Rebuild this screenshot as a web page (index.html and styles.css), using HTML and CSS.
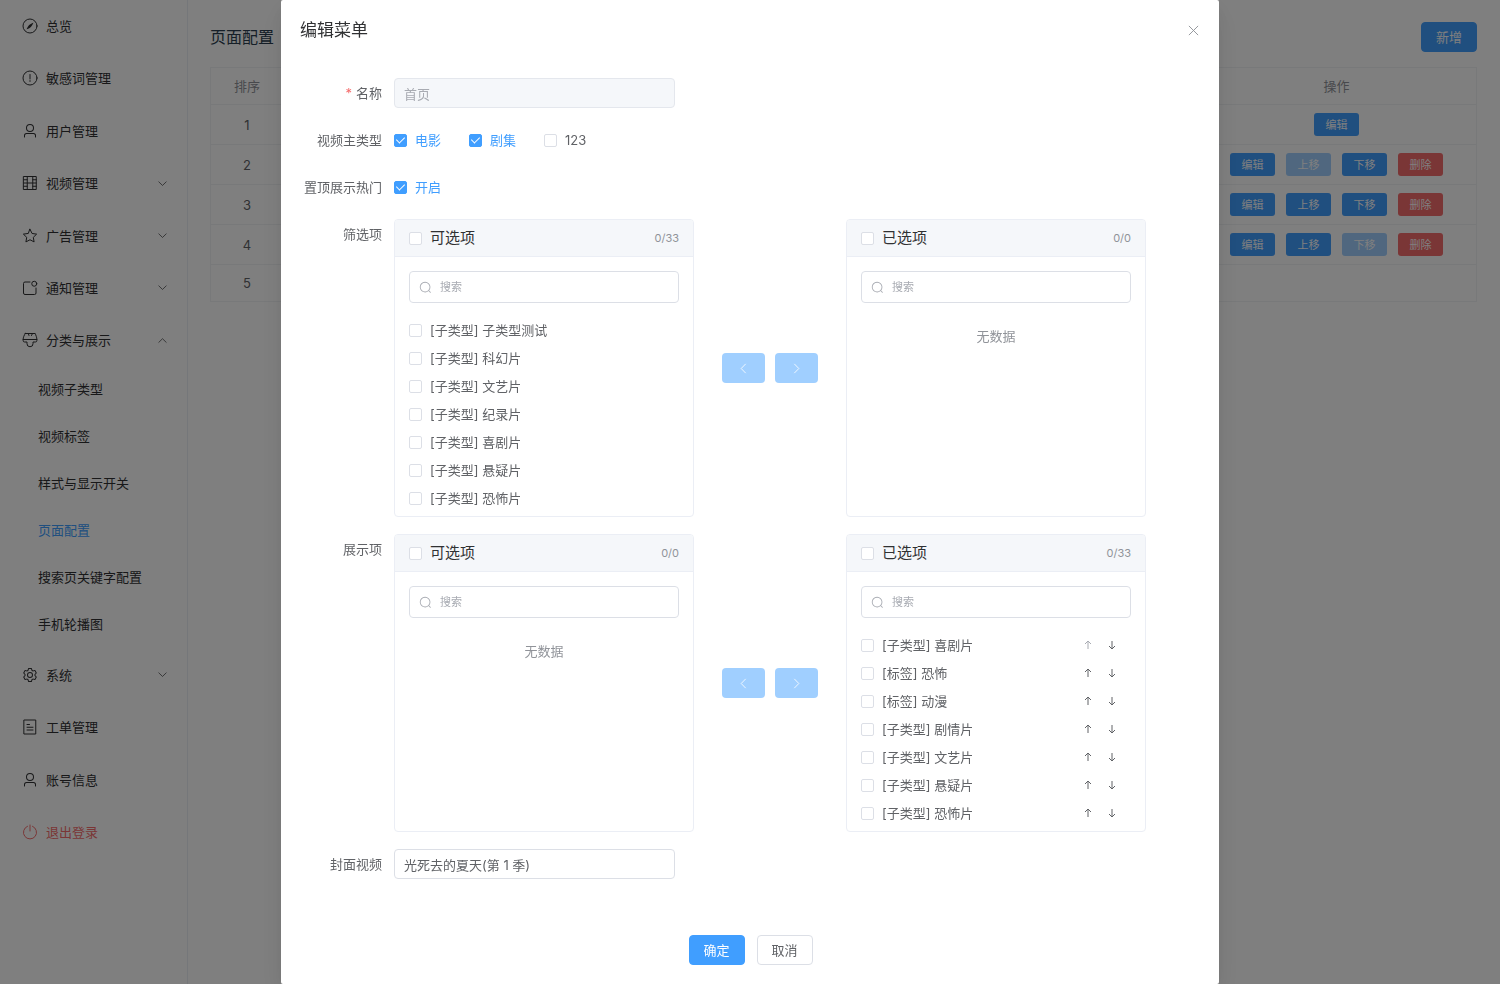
FILE: index.html
```html
<!DOCTYPE html>
<html lang="zh-CN">
<head>
    <meta charset="UTF-8">
    <meta name="viewport" content="width=device-width, initial-scale=1.0">
    <title>页面配置</title>
    <link rel="stylesheet" href="styles.css">
</head>
<body>
    <!-- icon sprite -->
    <svg class="sprite" aria-hidden="true">
        <symbol id="compass" viewBox="0 0 1024 1024">
            <circle class="line" cx="512" cy="512" r="448"/>
            <path d="M725.888 315.008C676.48 428.672 624 513.28 568.576 568.64c-55.424 55.424-139.968 107.904-253.568 157.312a12.8 12.8 0 0 1-16.896-16.832c49.536-113.728 102.016-198.272 157.312-253.632 55.36-55.296 139.904-107.776 253.632-157.312a12.8 12.8 0 0 1 16.832 16.832z"/>
        </symbol>
        <symbol id="warning" viewBox="0 0 1024 1024">
            <circle class="line" cx="512" cy="512" r="448"/>
            <path class="line" d="M512 288v288"/>
            <circle cx="512" cy="700" r="48"/>
        </symbol>
        <symbol id="user" viewBox="0 0 1024 1024">
            <path d="M512 512a192 192 0 1 0 0-384 192 192 0 0 0 0 384zm0 64a256 256 0 1 1 0-512 256 256 0 0 1 0 512zm320 320v-96a96 96 0 0 0-96-96H288a96 96 0 0 0-96 96v96a32 32 0 1 1-64 0v-96a160 160 0 0 1 160-160h448a160 160 0 0 1 160 160v96a32 32 0 1 1-64 0z"/>
        </symbol>
        <symbol id="film" viewBox="0 0 1024 1024">
            <path class="line" d="M112 96h800v832H112zM336 96v832M688 96v832M112 512h800M112 304h224M112 720h224M688 304h224M688 720h224"/>
        </symbol>
        <symbol id="star" viewBox="0 0 1024 1024">
            <path class="line" d="m512 80 130 270 294 42-214 206 52 292-262-138-262 138 52-292L88 392l294-42z"/>
        </symbol>
        <symbol id="notice" viewBox="0 0 1024 1024">
            <path class="line" d="M512 128H192a96 96 0 0 0-96 96v608a96 96 0 0 0 96 96h608a96 96 0 0 0 96-96V512"/>
            <circle class="line" cx="784" cy="240" r="160"/>
        </symbol>
        <symbol id="brush" viewBox="0 0 1024 1024">
            <path class="line" d="M208 96h640c32 100 104 250 104 384v64a96 96 0 0 1-96 96H704v112a192 192 0 0 1-384 0V640H168a96 96 0 0 1-96-96v-64c0-134 72-284 136-384zM72 480h880M400 96l48 128M608 224l64-128"/>
        </symbol>
        <symbol id="setting" viewBox="0 0 1024 1024">
            <path d="M600.704 64a32 32 0 0 1 30.464 22.208l35.2 109.376c14.784 7.232 28.928 15.36 42.432 24.512l112.384-24.192a32 32 0 0 1 34.432 15.36L944.32 364.8a32 32 0 0 1-4.032 37.504l-77.12 85.12a357.12 357.12 0 0 1 0 49.024l77.12 85.248a32 32 0 0 1 4.032 37.504l-88.704 153.6a32 32 0 0 1-34.432 15.296L708.8 803.904c-13.44 9.088-27.648 17.28-42.368 24.512l-35.264 109.376A32 32 0 0 1 600.704 960H423.296a32 32 0 0 1-30.464-22.208L357.696 828.48a351.616 351.616 0 0 1-42.56-24.64l-112.32 24.256a32 32 0 0 1-34.432-15.36L79.68 659.2a32 32 0 0 1 4.032-37.504l77.12-85.248a357.12 357.12 0 0 1 0-48.896l-77.12-85.248A32 32 0 0 1 79.68 364.8l88.704-153.6a32 32 0 0 1 34.432-15.296l112.32 24.256c13.568-9.152 27.776-17.408 42.56-24.64l35.2-109.312A32 32 0 0 1 423.232 64H600.64zm-23.424 64H446.72l-36.352 113.088-24.512 11.968a294.113 294.113 0 0 0-34.816 20.096l-22.656 15.36-116.224-25.088-65.28 113.152 79.68 88.192-1.92 27.136a293.12 293.12 0 0 0 0 40.192l1.92 27.136-79.808 88.192 65.344 113.152 116.224-25.024 22.656 15.296a294.113 294.113 0 0 0 34.816 20.096l24.512 11.968L446.72 896h130.688l36.48-113.152 24.448-11.904a288.282 288.282 0 0 0 34.752-20.096l22.592-15.296 116.288 25.024 65.28-113.152-79.744-88.192 1.92-27.136a293.12 293.12 0 0 0 0-40.256l-1.92-27.136 79.808-88.128-65.344-113.152-116.288 24.96-22.592-15.232a287.616 287.616 0 0 0-34.752-20.096l-24.448-11.904L577.344 128zM512 320a192 192 0 1 1 0 384 192 192 0 0 1 0-384zm0 64a128 128 0 1 0 0 256 128 128 0 0 0 0-256z"/>
        </symbol>
        <symbol id="tickets" viewBox="0 0 1024 1024">
            <path class="line" d="M144 64h736v896H144zM320 352h160M320 528h384M320 704h384"/>
        </symbol>
        <symbol id="power" viewBox="0 0 1024 1024">
            <path class="line" d="M352 144a420 420 0 1 0 320 0M512 64v384"/>
        </symbol>
        <symbol id="arrow-down" viewBox="0 0 1024 1024">
            <path class="line" d="m170 362 342 333 342-333"/>
        </symbol>
        <symbol id="arrow-up" viewBox="0 0 1024 1024">
            <path class="line" d="m170 680 342-333 342 333"/>
        </symbol>
        <symbol id="arrow-left" viewBox="0 0 1024 1024">
            <path class="line" d="M662 170 329 512l333 342"/>
        </symbol>
        <symbol id="arrow-right" viewBox="0 0 1024 1024">
            <path class="line" d="m362 170 333 342-333 342"/>
        </symbol>
        <symbol id="search" viewBox="0 0 1024 1024">
            <path d="m795.904 750.72 124.992 124.928a32 32 0 0 1-45.248 45.248L750.656 795.904a416 416 0 1 1 45.248-45.248zM480 832a352 352 0 1 0 0-704 352 352 0 0 0 0 704z"/>
        </symbol>
        <symbol id="close" viewBox="0 0 1024 1024">
            <path class="line" d="m216 216 592 592M808 216 216 808"/>
        </symbol>
        <symbol id="move-up" viewBox="0 0 12 12">
            <path class="arrow" d="M6 10V2M3 5l3-3 3 3"/>
        </symbol>
        <symbol id="move-down" viewBox="0 0 12 12">
            <path class="arrow" d="M6 2v8M3 7l3 3 3-3"/>
        </symbol>
    </svg>

    <div class="layout">
        <nav class="sidebar">
            <ul class="menu">
                <li><a class="menu-item" href="#"><svg class="icon"><use href="#compass"/></svg>总览</a></li>
                <li><a class="menu-item" href="#"><svg class="icon"><use href="#warning"/></svg>敏感词管理</a></li>
                <li><a class="menu-item" href="#"><svg class="icon"><use href="#user"/></svg>用户管理</a></li>
                <li><a class="menu-item" href="#"><svg class="icon"><use href="#film"/></svg>视频管理<svg class="caret"><use href="#arrow-down"/></svg></a></li>
                <li><a class="menu-item" href="#"><svg class="icon"><use href="#star"/></svg>广告管理<svg class="caret"><use href="#arrow-down"/></svg></a></li>
                <li><a class="menu-item" href="#"><svg class="icon"><use href="#notice"/></svg>通知管理<svg class="caret"><use href="#arrow-down"/></svg></a></li>
                <li>
                    <a class="menu-item" href="#"><svg class="icon"><use href="#brush"/></svg>分类与展示<svg class="caret"><use href="#arrow-up"/></svg></a>
                    <ul class="submenu">
                        <li><a href="#">视频子类型</a></li>
                        <li><a href="#">视频标签</a></li>
                        <li><a href="#">样式与显示开关</a></li>
                        <li><a class="active" href="#">页面配置</a></li>
                        <li><a href="#">搜索页关键字配置</a></li>
                        <li><a href="#">手机轮播图</a></li>
                    </ul>
                </li>
                <li><a class="menu-item" href="#"><svg class="icon"><use href="#setting"/></svg>系统<svg class="caret"><use href="#arrow-down"/></svg></a></li>
                <li><a class="menu-item" href="#"><svg class="icon"><use href="#tickets"/></svg>工单管理</a></li>
                <li><a class="menu-item" href="#"><svg class="icon"><use href="#user"/></svg>账号信息</a></li>
                <li><a class="menu-item logout" href="#"><svg class="icon"><use href="#power"/></svg>退出登录</a></li>
            </ul>
        </nav>

        <main class="main">
            <div class="page-header">
                <h1>页面配置</h1>
                <button class="btn btn-primary" type="button">新增</button>
            </div>
            <table class="table">
                <thead>
                    <tr><th class="col-order">排序</th><th></th><th class="col-action">操作</th></tr>
                </thead>
                <tbody>
                    <tr>
                        <td>1</td>
                        <td></td>
                        <td><div class="actions"><button class="btn-small" type="button">编辑</button></div></td>
                    </tr>
                    <tr>
                        <td>2</td>
                        <td></td>
                        <td><div class="actions">
                            <button class="btn-small" type="button">编辑</button>
                            <button class="btn-small" type="button" disabled>上移</button>
                            <button class="btn-small" type="button">下移</button>
                            <button class="btn-small btn-danger" type="button">删除</button>
                        </div></td>
                    </tr>
                    <tr>
                        <td>3</td>
                        <td></td>
                        <td><div class="actions">
                            <button class="btn-small" type="button">编辑</button>
                            <button class="btn-small" type="button">上移</button>
                            <button class="btn-small" type="button">下移</button>
                            <button class="btn-small btn-danger" type="button">删除</button>
                        </div></td>
                    </tr>
                    <tr>
                        <td>4</td>
                        <td></td>
                        <td><div class="actions">
                            <button class="btn-small" type="button">编辑</button>
                            <button class="btn-small" type="button">上移</button>
                            <button class="btn-small" type="button" disabled>下移</button>
                            <button class="btn-small btn-danger" type="button">删除</button>
                        </div></td>
                    </tr>
                    <tr><td>5</td><td></td><td></td></tr>
                </tbody>
            </table>
        </main>
    </div>

    <div class="overlay">
        <div class="dialog" role="dialog" aria-labelledby="dialogTitle">
            <div class="dialog-header">
                <h2 id="dialogTitle">编辑菜单</h2>
                <button class="close-btn" type="button" aria-label="关闭"><svg><use href="#close"/></svg></button>
            </div>

            <form class="form">
                <div class="form-item">
                    <label class="form-label required" for="name">名称</label>
                    <input class="input" type="text" id="name" value="首页" disabled>
                </div>
                <div class="form-item">
                    <span class="form-label">视频主类型</span>
                    <div class="check-group">
                        <label class="check"><input type="checkbox" checked><span>电影</span></label>
                        <label class="check"><input type="checkbox" checked><span>剧集</span></label>
                        <label class="check"><input type="checkbox"><span>123</span></label>
                    </div>
                </div>
                <div class="form-item">
                    <span class="form-label">置顶展示热门</span>
                    <div class="check-group">
                        <label class="check"><input type="checkbox" checked><span>开启</span></label>
                    </div>
                </div>

                <div class="form-item">
                    <span class="form-label">筛选项</span>
                    <div class="transfer">
                        <div class="panel">
                            <div class="panel-header">
                                <label class="check"><input type="checkbox"><span>可选项</span></label>
                                <span class="count">0/33</span>
                            </div>
                            <div class="search">
                                <svg><use href="#search"/></svg>
                                <input type="text" placeholder="搜索" aria-label="搜索">
                            </div>
                            <ul class="panel-list">
                                <li><label class="check"><input type="checkbox"><span>[子类型] 子类型测试</span></label></li>
                                <li><label class="check"><input type="checkbox"><span>[子类型] 科幻片</span></label></li>
                                <li><label class="check"><input type="checkbox"><span>[子类型] 文艺片</span></label></li>
                                <li><label class="check"><input type="checkbox"><span>[子类型] 纪录片</span></label></li>
                                <li><label class="check"><input type="checkbox"><span>[子类型] 喜剧片</span></label></li>
                                <li><label class="check"><input type="checkbox"><span>[子类型] 悬疑片</span></label></li>
                                <li><label class="check"><input type="checkbox"><span>[子类型] 恐怖片</span></label></li>
                            </ul>
                        </div>
                        <div class="transfer-buttons">
                            <button type="button" aria-label="移到左侧" disabled><svg><use href="#arrow-left"/></svg></button>
                            <button type="button" aria-label="移到右侧" disabled><svg><use href="#arrow-right"/></svg></button>
                        </div>
                        <div class="panel">
                            <div class="panel-header">
                                <label class="check"><input type="checkbox"><span>已选项</span></label>
                                <span class="count">0/0</span>
                            </div>
                            <div class="search">
                                <svg><use href="#search"/></svg>
                                <input type="text" placeholder="搜索" aria-label="搜索">
                            </div>
                            <p class="empty">无数据</p>
                        </div>
                    </div>
                </div>

                <div class="form-item">
                    <span class="form-label">展示项</span>
                    <div class="transfer">
                        <div class="panel">
                            <div class="panel-header">
                                <label class="check"><input type="checkbox"><span>可选项</span></label>
                                <span class="count">0/0</span>
                            </div>
                            <div class="search">
                                <svg><use href="#search"/></svg>
                                <input type="text" placeholder="搜索" aria-label="搜索">
                            </div>
                            <p class="empty">无数据</p>
                        </div>
                        <div class="transfer-buttons">
                            <button type="button" aria-label="移到左侧" disabled><svg><use href="#arrow-left"/></svg></button>
                            <button type="button" aria-label="移到右侧" disabled><svg><use href="#arrow-right"/></svg></button>
                        </div>
                        <div class="panel">
                            <div class="panel-header">
                                <label class="check"><input type="checkbox"><span>已选项</span></label>
                                <span class="count">0/33</span>
                            </div>
                            <div class="search">
                                <svg><use href="#search"/></svg>
                                <input type="text" placeholder="搜索" aria-label="搜索">
                            </div>
                            <ul class="panel-list">
                                <li>
                                    <label class="check"><input type="checkbox"><span>[子类型] 喜剧片</span></label>
                                    <span class="sort"><button type="button" aria-label="上移" disabled><svg><use href="#move-up"/></svg></button><button type="button" aria-label="下移"><svg><use href="#move-down"/></svg></button></span>
                                </li>
                                <li>
                                    <label class="check"><input type="checkbox"><span>[标签] 恐怖</span></label>
                                    <span class="sort"><button type="button" aria-label="上移"><svg><use href="#move-up"/></svg></button><button type="button" aria-label="下移"><svg><use href="#move-down"/></svg></button></span>
                                </li>
                                <li>
                                    <label class="check"><input type="checkbox"><span>[标签] 动漫</span></label>
                                    <span class="sort"><button type="button" aria-label="上移"><svg><use href="#move-up"/></svg></button><button type="button" aria-label="下移"><svg><use href="#move-down"/></svg></button></span>
                                </li>
                                <li>
                                    <label class="check"><input type="checkbox"><span>[子类型] 剧情片</span></label>
                                    <span class="sort"><button type="button" aria-label="上移"><svg><use href="#move-up"/></svg></button><button type="button" aria-label="下移"><svg><use href="#move-down"/></svg></button></span>
                                </li>
                                <li>
                                    <label class="check"><input type="checkbox"><span>[子类型] 文艺片</span></label>
                                    <span class="sort"><button type="button" aria-label="上移"><svg><use href="#move-up"/></svg></button><button type="button" aria-label="下移"><svg><use href="#move-down"/></svg></button></span>
                                </li>
                                <li>
                                    <label class="check"><input type="checkbox"><span>[子类型] 悬疑片</span></label>
                                    <span class="sort"><button type="button" aria-label="上移"><svg><use href="#move-up"/></svg></button><button type="button" aria-label="下移"><svg><use href="#move-down"/></svg></button></span>
                                </li>
                                <li>
                                    <label class="check"><input type="checkbox"><span>[子类型] 恐怖片</span></label>
                                    <span class="sort"><button type="button" aria-label="上移"><svg><use href="#move-up"/></svg></button><button type="button" aria-label="下移"><svg><use href="#move-down"/></svg></button></span>
                                </li>
                            </ul>
                        </div>
                    </div>
                </div>

                <div class="form-item">
                    <label class="form-label" for="cover">封面视频</label>
                    <input class="input" type="text" id="cover" value="光死去的夏天(第 1 季)">
                </div>

                <div class="dialog-footer">
                    <button class="btn btn-primary" type="button">确定</button>
                    <button class="btn" type="button">取消</button>
                </div>
            </form>
        </div>
    </div>
</body>
</html>
```

FILE: styles.css
```css
* {
    margin: 0;
    padding: 0;
    box-sizing: border-box;
}

body {
    background: #fff;
    color: #303133;
    font-family: Inter, "Noto Sans CJK SC", sans-serif;
    font-size: 13px;
    line-height: 20px;
    min-height: 100vh;
}

button,
input {
    font: inherit;
    color: inherit;
}

button {
    cursor: pointer;
}

ul {
    list-style: none;
}

a {
    color: inherit;
    text-decoration: none;
}

svg {
    display: block;
    flex: none;
    fill: currentColor;
}

.sprite {
    display: none;
}

.line {
    fill: none;
    stroke: currentColor;
    stroke-width: 64;
    stroke-linecap: round;
    stroke-linejoin: round;
}

.arrow {
    fill: none;
    stroke: currentColor;
    stroke-width: 1;
}

/* page behind the dialog */
.layout {
    display: flex;
    min-height: 100vh;
}

.sidebar {
    width: 188px;
    flex: none;
    border-right: 1px solid #ebeef5;
}

.menu {
    display: flex;
    flex-direction: column;
    justify-content: space-between;
    min-height: 858px;
}

.menu-item {
    display: flex;
    align-items: center;
    height: 52px;
    padding: 0 19px 0 22px;
}

.icon {
    width: 16px;
    height: 16px;
    margin-right: 8px;
}

.caret {
    width: 11px;
    height: 11px;
    margin-left: auto;
}

.submenu a {
    display: block;
    line-height: 47px;
    padding-left: 38px;
}

.submenu .active {
    color: #409eff;
}

.logout {
    color: #f56c6c;
}

.main {
    flex: 1;
    padding: 22px 23px 22px 22px;
}

.page-header {
    display: flex;
    justify-content: space-between;
    align-items: center;
    margin-bottom: 15px;
}

.page-header h1 {
    font-size: 16px;
    font-weight: 400;
    color: #2c3e50;
}

.btn {
    width: 56px;
    height: 30px;
    border: 1px solid #dcdfe6;
    border-radius: 4px;
    background: #fff;
    color: #606266;
}

.btn-primary {
    background: #409eff;
    border-color: #409eff;
    color: #fff;
}

.table {
    width: 100%;
    table-layout: fixed;
    border: 1px solid #f0f2f5;
    border-spacing: 0;
    color: #606266;
    text-align: center;
}

.table th {
    height: 37px;
    font-weight: 400;
    color: #909399;
}

.table th,
.table td {
    border-bottom: 1px solid #f0f2f5;
}

.table td {
    padding: 8px 0;
}

.table tr:last-child td {
    border-bottom: 0;
}

.col-order {
    width: 72px;
}

.col-action {
    width: 279px;
}

.actions {
    display: flex;
    justify-content: center;
    gap: 11px;
}

.btn-small {
    width: 45px;
    height: 23px;
    border: 0;
    border-radius: 3px;
    background: #409eff;
    color: #fff;
    font-size: 11px;
}

.btn-small:disabled {
    background: #a0cfff;
}

.btn-small.btn-danger {
    background: #f56c6c;
}

/* dialog */
.overlay {
    position: fixed;
    inset: 0;
    overflow: hidden;
    background: rgba(0, 0, 0, 0.5);
}

.dialog {
    width: 938px;
    max-width: 100%;
    min-height: 100%;
    margin: 0 auto;
    padding: 19px 18px 19px 19px;
    background: #fff;
    border-radius: 2px;
    box-shadow: 0 12px 32px 4px rgba(0, 0, 0, 0.04), 0 8px 20px rgba(0, 0, 0, 0.08);
}

.dialog-header {
    display: flex;
    justify-content: space-between;
    align-items: center;
    height: 22px;
    margin-bottom: 37px;
}

.dialog-header h2 {
    font-size: 17px;
    font-weight: 400;
}

.close-btn {
    border: 0;
    background: none;
    color: #909399;
}

.close-btn svg {
    width: 15px;
    height: 15px;
}

.form {
    color: #606266;
}

.form-item {
    display: flex;
    margin-bottom: 17px;
}

.form-label {
    flex: none;
    width: 94px;
    padding-right: 12px;
    line-height: 30px;
    text-align: right;
    white-space: nowrap;
}

.required::before {
    content: "*";
    margin-right: 4px;
    color: #f56c6c;
}

.input {
    width: 281px;
    height: 30px;
    padding: 0 9px;
    border: 1px solid #dcdfe6;
    border-radius: 4px;
    background: #fff;
    outline: none;
}

.input:disabled {
    background: #f5f7fa;
    border-color: #e4e7ed;
    color: #a8abb2;
}

.input:focus {
    border-color: #409eff;
}

.check-group {
    display: flex;
    gap: 28px;
}

.check {
    display: flex;
    align-items: center;
    gap: 8px;
    min-height: 28px;
    cursor: pointer;
}

.check-group .check {
    min-height: 30px;
}

.check input {
    appearance: none;
    flex: none;
    display: flex;
    justify-content: center;
    align-items: center;
    width: 13px;
    height: 13px;
    border: 1px solid #dcdfe6;
    border-radius: 2px;
    background: #fff;
}

.check input:checked {
    background: #409eff;
    border-color: #409eff;
}

.check input:checked::after {
    content: "";
    width: 4px;
    height: 7px;
    margin-bottom: 2px;
    border: solid #fff;
    border-width: 0 1px 1px 0;
    transform: rotate(45deg);
}

.check input:checked + span {
    color: #409eff;
}

.transfer {
    display: flex;
    align-items: center;
}

.panel {
    width: 300px;
    height: 298px;
    border: 1px solid #ebeef5;
    border-radius: 4px;
    overflow: hidden;
}

.panel-header {
    display: flex;
    justify-content: space-between;
    align-items: center;
    height: 37px;
    padding: 0 14px;
    background: #f5f7fa;
    border-bottom: 1px solid #ebeef5;
}

.panel-header .check {
    font-size: 15px;
    color: #303133;
}

.count {
    font-size: 11px;
    color: #909399;
}

.search {
    display: flex;
    align-items: center;
    gap: 8px;
    height: 32px;
    margin: 14px 14px 13px;
    padding: 0 9px;
    border: 1px solid #dcdfe6;
    border-radius: 4px;
    color: #a8abb2;
}

.search svg {
    width: 13px;
    height: 13px;
}

.search input {
    flex: 1;
    min-width: 0;
    border: 0;
    outline: none;
    background: none;
    color: #606266;
    font-size: 11px;
}

.search input::placeholder {
    color: #a8abb2;
}

.panel-list li {
    display: flex;
    justify-content: space-between;
    height: 28px;
    padding: 0 25px 0 14px;
}

.sort {
    display: flex;
    align-items: center;
    gap: 8px;
}

.sort button {
    display: flex;
    justify-content: center;
    width: 16px;
    border: 0;
    background: none;
}

.sort button:disabled {
    color: #a8abb2;
}

.sort svg {
    width: 12px;
    height: 12px;
}

.empty {
    padding-top: 6px;
    line-height: 28px;
    text-align: center;
    color: #909399;
}

.transfer-buttons {
    display: flex;
    gap: 10px;
    margin: 0 28px;
}

.transfer-buttons button {
    display: flex;
    justify-content: center;
    align-items: center;
    width: 43px;
    height: 30px;
    border: 0;
    border-radius: 4px;
    background: #a0cfff;
    color: #fff;
}

.transfer-buttons svg {
    width: 13px;
    height: 13px;
}

.dialog-footer {
    display: flex;
    justify-content: center;
    gap: 12px;
    padding-top: 39px;
}
```
